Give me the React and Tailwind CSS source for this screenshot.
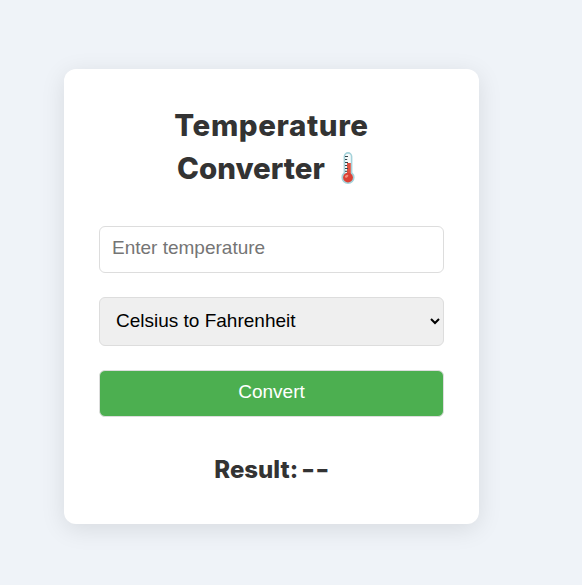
function Thermometer() {
  return (
    <svg className="mr-[11px] ml-[16px] h-[33px] w-[14px]" viewBox="0 0 14 33" aria-label="thermometer">
      <path d="M2.600 20.500V4.500a4.400 4.400 0 0 1 8.800 0v16a6.600 6.600 0 1 1-8.800 0z" fill="#a5d2da" />
      <path d="M4.200 21V4.500a2.800 2.800 0 0 1 5.600 0V21z" fill="#f6fafa" />
      <path d="M6 11h3.800v11H6z" fill="#e0503f" />
      <circle cx="7" cy="25.600" r="4.900" fill="#dc4134" />
      <ellipse cx="5.600" cy="24.200" rx="1.900" ry="1.200" fill="#f29180" transform="rotate(-35 5.600 24.200)" />
      <path d="M4 4.500h3M4 7.500h2.200M4 10.500h3M4 13.500h2.200M4 16.500h3M4 19.300h2.200" stroke="#35454b" strokeWidth="1" />
    </svg>
  );
}

export default function App() {
  return (
    <div className="h-[585px] bg-[#eff3f8] pt-[69px] pl-16 font-['Liberation_Sans',Arial,sans-serif]">
      <main className="flex h-[455px] w-[415px] flex-col rounded-[12px] bg-white px-[35px] pt-[35px] shadow-[0_5px_24px_rgba(0,0,0,0.1)]">
        <h1 className="flex flex-col items-center font-['Inter',sans-serif] text-[29.5px] leading-[43px] font-extrabold text-[#333333]">
          <span className="tracking-[0.6px]">Temperature</span>
          <span className="flex items-center">
            Converter
            <Thermometer />
          </span>
        </h1>
        <input
          type="text"
          placeholder="Enter temperature"
          className="mt-9 h-[47px] w-full shrink-0 rounded-[6px] border border-[#dddddd] px-3 pb-[3px] text-[19px] placeholder:text-[#757575]"
        />
        <select className="mt-6 h-[49px] w-full shrink-0 rounded-[6px] border border-[#dddddd] bg-[#efefef] px-3 pb-0.5 text-[19px] text-black">
          <option>Celsius to Fahrenheit</option>
          <option>Fahrenheit to Celsius</option>
        </select>
        <button className="mt-6 h-[47px] w-full shrink-0 rounded-[6px] border border-[#dddddd] bg-[#4caf50] pb-[3px] text-[19px] text-white">
          Convert
        </button>
        <h2 className="mt-[35px] flex justify-center gap-[3px] pr-[5px] font-['Inter',sans-serif] text-[24px] leading-[36px] font-extrabold text-[#333333]">
          <span>Result:</span>
          <span className="inline-block origin-left scale-x-125">--</span>
        </h2>
      </main>
    </div>
  );
}
